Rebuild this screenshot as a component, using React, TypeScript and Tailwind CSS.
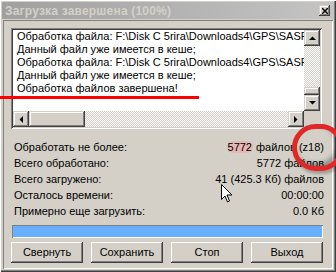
import React from "react";

const raised =
  "shadow-[inset_-1px_-1px_0_#404040,inset_1px_1px_0_#d4d0c8,inset_-2px_-2px_0_#808080,inset_2px_2px_0_#ffffff]";
const sunken =
  "shadow-[inset_1px_1px_0_#808080,inset_-1px_-1px_0_#ffffff,inset_2px_2px_0_#404040,inset_-2px_-2px_0_#d4d0c8]";
const dither =
  "bg-[repeating-conic-gradient(#d4d0c8_0_25%,#ffffff_0_50%)] bg-[length:2px_2px]";

const logLines = [
  "Обработка файла: F:\\Disk C 5rira\\Downloads4\\GPS\\SASPlanet",
  "Данный файл уже имеется в кеше;",
  "Обработка файла: F:\\Disk C 5rira\\Downloads4\\GPS\\SASPlanet",
  "Данный файл уже имеется в кеше;",
  "Обработка файлов завершена!",
];

function Arrow({ dir }: { dir: "up" | "down" | "left" | "right" }) {
  const pts = {
    up: "0,4 7,4 3.5,0.5",
    down: "0,0 7,0 3.5,3.5",
    left: "4,0 4,7 0.5,3.5",
    right: "0,0 0,7 3.5,3.5",
  }[dir];
  const vertical = dir === "up" || dir === "down";
  return (
    <svg width={vertical ? 7 : 4} height={vertical ? 4 : 7} viewBox={vertical ? "0 0 7 4" : "0 0 4 7"}>
      <polygon points={pts} fill="#000" />
    </svg>
  );
}

function ScrollBtn({ dir }: { dir: "up" | "down" | "left" | "right" }) {
  return (
    <div className={`w-[16px] h-[16px] bg-[#d4d0c8] flex items-center justify-center shrink-0 ${raised}`}>
      <Arrow dir={dir} />
    </div>
  );
}

function StatRow({ label, children }: { label: string; children: React.ReactNode }) {
  return (
    <div className="flex items-center justify-between h-[16px] leading-[16px]">
      <span>{label}</span>
      <span>{children}</span>
    </div>
  );
}

function WinButton({ label }: { label: string }) {
  return (
    <button className="w-[72px] h-[21px] bg-[#d4d0c8] text-black text-[11px] leading-[21px] shadow-[inset_-1px_-1px_0_#404040,inset_1px_1px_0_#ffffff,inset_-2px_-2px_0_#808080]">
      {label}
    </button>
  );
}

export default function App() {
  return (
    <div className="relative w-[336px] h-[272px] overflow-hidden bg-[#d4d0c8] font-['Liberation_Sans',Arial,sans-serif] text-[11px] text-black shadow-[inset_1px_1px_0_#ffffff,inset_-1px_-1px_0_#404040,inset_-2px_-2px_0_#808080]">
      {/* Title bar */}
      <div className="mx-[2px] mt-[2px] h-[17px] flex items-center justify-between pl-[3px] pr-[4px] bg-[linear-gradient(to_right,#a0a0a0,#c4c4c4)]">
        <span className="font-bold text-[12px] text-[#d4d0c8] tracking-[0.2px]">Загрузка завершена (100%)</span>
        <div className={`w-[11px] h-[11px] bg-[#d4d0c8] flex items-center justify-center ${raised}`}>
          <svg width="6" height="6" viewBox="0 0 6 6">
            <path d="M0 0 L6 6 M6 0 L0 6" stroke="#000" strokeWidth="1.4" />
          </svg>
        </div>
      </div>

      {/* Client */}
      <div className="mx-[3px] mt-[1px] h-[249px] px-[8px] pt-[8px] shadow-[inset_1px_1px_0_#808080,inset_-1px_-1px_0_#ffffff]">
        {/* Log list */}
        <div className={`w-[311px] h-[101px] bg-white p-[2px] ${sunken}`}>
          <div className="flex h-[81px]">
            <div className="flex-1 overflow-hidden pl-[4px] whitespace-nowrap leading-[13px]">
              {logLines.map((l, i) => (
                <div key={i} className="h-[13px]">{l}</div>
              ))}
            </div>
            <div className={`w-[16px] flex flex-col ${dither}`}>
              <ScrollBtn dir="up" />
              <div className="flex-1" />
              <div className={`h-[8px] bg-[#d4d0c8] ${raised}`} />
              <ScrollBtn dir="down" />
            </div>
          </div>
          <div className="flex h-[16px]">
            <div className={`flex flex-1 ${dither}`}>
              <ScrollBtn dir="left" />
              <div className={`w-[56px] bg-[#d4d0c8] ${raised}`} />
              <div className="flex-1" />
              <ScrollBtn dir="right" />
            </div>
            <div className="w-[16px] bg-[#d4d0c8]" />
          </div>
        </div>

        {/* Stats */}
        <div className="mt-[10px] pl-[3px] pr-[1px] flex flex-col">
          <StatRow label="Обработать не более:">
            <span className="rounded-[6px] bg-[#e6b8b4] px-[1px]">5772</span> файлов (z18)
          </StatRow>
          <StatRow label="Всего обработано:">5772 файлов</StatRow>
          <StatRow label="Всего загружено:">41 (425.3 Кб) файлов</StatRow>
          <StatRow label="Осталось времени:">00:00:00</StatRow>
          <StatRow label="Примерно еще загрузить:">0.0 Кб</StatRow>
        </div>

        {/* Progress */}
        <div className="mt-[6px] ml-[1px] w-[311px] h-[13px] p-[1px] bg-[#d4d0c8] shadow-[inset_1px_1px_0_#808080,inset_-1px_-1px_0_#ffffff]">
          <div className="w-full h-full bg-[#66b0ff]" />
        </div>

        {/* Buttons */}
        <div className="mt-[4px] flex gap-[8px]">
          <WinButton label="Свернуть" />
          <WinButton label="Сохранить" />
          <WinButton label="Стоп" />
          <WinButton label="Выход" />
        </div>
      </div>

      {/* Annotations */}
      <div className="absolute left-0 top-[96px] w-[199px] h-[3px] bg-[#ff0000]" />
      <div className="absolute left-[292px] top-[124px] w-[52px] h-[47px] rounded-full border-[5px] border-[#e02828] shadow-[inset_-3px_-3px_4px_rgba(0,0,0,0.3),2px_3px_3px_rgba(0,0,0,0.25)]" />
      <svg className="absolute left-[221px] top-[184px]" width="12" height="19" viewBox="0 0 12 19">
        <path d="M0.5 0.5 L0.5 15.5 L4 12 L6.5 18 L8.5 17 L6 11 L11 11 Z" fill="#fff" stroke="#000" strokeWidth="1" />
      </svg>
    </div>
  );
}
